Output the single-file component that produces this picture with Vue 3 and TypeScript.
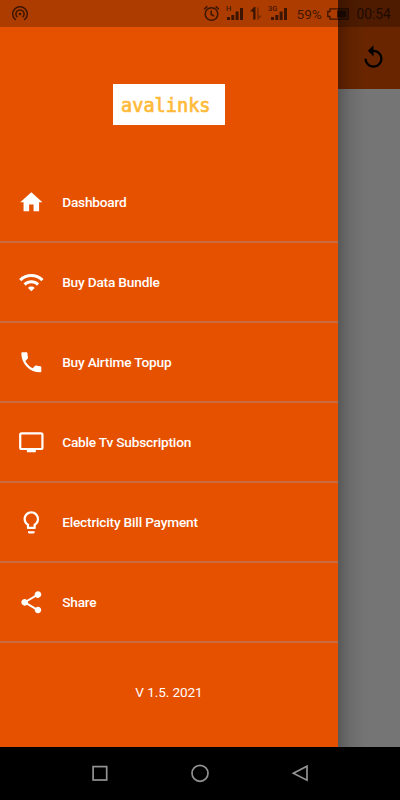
<script setup lang="ts">
interface MenuItem {
  label: string
  path: string
}

const items: MenuItem[] = [
  { label: 'Dashboard', path: 'M10 20v-6h4v6h5v-8h3L12 3 2 12h3v8z' },
  {
    label: 'Buy Data Bundle',
    path: 'M1 9l2 2c4.97-4.97 13.03-4.97 18 0l2-2C16.93 2.93 7.08 2.93 1 9zm8 8l3 3 3-3c-1.65-1.66-4.34-1.66-6 0zm-4-4l2 2c2.76-2.76 7.24-2.76 10 0l2-2C15.14 9.14 8.87 9.14 5 13z',
  },
  {
    label: 'Buy Airtime Topup',
    path: 'M6.62 10.79c1.44 2.83 3.76 5.14 6.59 6.59l2.2-2.2c.27-.27.67-.36 1.02-.24 1.12.37 2.33.57 3.57.57.55 0 1 .45 1 1V20c0 .55-.45 1-1 1-9.39 0-17-7.61-17-17 0-.55.45-1 1-1h3.5c.55 0 1 .45 1 1 0 1.25.2 2.45.57 3.57.11.35.03.74-.25 1.02l-2.2 2.2z',
  },
  {
    label: 'Cable Tv Subscription',
    path: 'M21 3H3c-1.1 0-2 .9-2 2v12c0 1.1.9 2 2 2h5v2h8v-2h5c1.1 0 1.99-.9 1.99-2L23 5c0-1.1-.9-2-2-2zm0 14H3V5h18v12z',
  },
  {
    label: 'Electricity Bill Payment',
    path: 'M9 21c0 .55.45 1 1 1h4c.55 0 1-.45 1-1v-1H9v1zm3-19C8.14 2 5 5.14 5 9c0 2.38 1.19 4.47 3 5.74V17c0 .55.45 1 1 1h6c.55 0 1-.45 1-1v-2.26c1.81-1.27 3-3.36 3-5.74 0-3.86-3.14-7-7-7zm2.85 11.1l-.85.6V16h-4v-2.3l-.85-.6C7.8 12.16 7 10.63 7 9c0-2.76 2.24-5 5-5s5 2.24 5 5c0 1.63-.8 3.16-2.15 4.1z',
  },
  {
    label: 'Share',
    path: 'M18 16.08c-.76 0-1.44.3-1.96.77L8.91 12.7c.05-.23.09-.46.09-.7s-.04-.47-.09-.7l7.05-4.11c.54.5 1.25.81 2.04.81 1.66 0 3-1.34 3-3s-1.34-3-3-3-3 1.34-3 3c0 .24.04.47.09.7L8.04 9.81C7.5 9.31 6.79 9 6 9c-1.66 0-3 1.34-3 3s1.34 3 3 3c.79 0 1.5-.31 2.04-.81l7.12 4.16c-.05.21-.08.43-.08.65 0 1.61 1.31 2.92 2.92 2.92s2.92-1.31 2.92-2.92-1.31-2.92-2.92-2.92z',
  },
]
</script>

<template>
  <div class="phone">
    <div class="screen">
      <main class="page">
        <header class="app-bar">
          <svg class="refresh" viewBox="0 0 24 24">
            <path d="M12 5V1L7 6l5 5V7c3.31 0 6 2.69 6 6s-2.69 6-6 6-6-2.69-6-6H4c0 4.42 3.58 8 8 8s8-3.58 8-8-3.58-8-8-8z" />
          </svg>
        </header>
      </main>

      <aside class="drawer">
        <div class="brand"><div class="logo">avalinks</div></div>
        <nav>
          <a v-for="item in items" :key="item.label" class="row">
            <svg class="row-icon" viewBox="0 0 24 24"><path :d="item.path" /></svg>
            <span>{{ item.label }}</span>
          </a>
        </nav>
        <p class="version">V 1.5. 2021</p>
      </aside>

      <div class="status">
        <svg class="hotspot" viewBox="0 0 16 16">
          <circle cx="8" cy="8" r="1.3" fill="currentColor" stroke="none" />
          <path d="M5.4 11.2A4.1 4.1 0 1 1 10.6 11.2M3.8 14A7.3 7.3 0 1 1 12.2 14" />
        </svg>
        <svg class="alarm" viewBox="0 0 17 17">
          <circle cx="8.5" cy="9" r="6.3" />
          <path d="M8.2 5.5V9.5L11 11M1 4.3L4.4 1.4M12.6 1.4L16 4.3" />
        </svg>
        <div class="cell">
          <span class="net">H</span>
          <svg viewBox="0 0 16 12"><path d="M0 9h3v3H0zM4.3 7h3v5h-3zM8.6 3.5h3V12h-3zM13 0h3v12h-3z" /></svg>
        </div>
        <svg class="updown" viewBox="0 0 12 13">
          <path d="M0 4.5L4 0H5.5V12.5H3.2V4.5z" />
          <path class="down" d="M7.2 0.5H8.7V8.5H12L8 13H7.2z" />
        </svg>
        <div class="cell second">
          <span class="net">3G</span>
          <svg viewBox="0 0 16 12"><path d="M0 9h3v3H0zM4.3 7h3v5h-3zM8.6 3.5h3V12h-3zM13 0h3v12h-3z" /></svg>
        </div>
        <span class="percent">59%</span>
        <svg class="battery" viewBox="0 0 22 12">
          <path class="case" d="M3 .8H21.2V11.2H3V8.5H.8V3.5H3z" />
          <path class="charge" d="M10 2.5H19.5V9.5H10z" />
        </svg>
        <span class="clock">00:54</span>
      </div>
    </div>

    <footer class="keys">
      <svg viewBox="0 0 20 20"><rect x="3.1" y="3.6" width="13.6" height="13.4" /></svg>
      <svg viewBox="0 0 20 20"><circle cx="10" cy="10.3" r="8" /></svg>
      <svg viewBox="0 0 20 20"><path d="M17 3.2V17.2L3.4 10.2z" /></svg>
    </footer>
  </div>
</template>

<style>
body {
  margin: 0;
}
</style>

<style scoped>
.phone {
  width: 400px;
  height: 800px;
  display: flex;
  flex-direction: column;
  overflow: hidden;
  font-family: Roboto, 'Liberation Sans', sans-serif;
}
.screen {
  position: relative;
  height: 747px;
}
.page {
  height: 100%;
  background: #757575;
}
.app-bar {
  height: 89px;
  box-sizing: border-box;
  padding: 25px 13px 0 0;
  display: flex;
  align-items: center;
  justify-content: flex-end;
  background: #692500;
}
.refresh {
  width: 27px;
  height: 27px;
  fill: #000;
}
.drawer {
  position: absolute;
  top: 0;
  left: 0;
  width: 338px;
  height: 747px;
  box-sizing: border-box;
  padding-top: 27px;
  background: #e65100;
  color: #fff;
}
.drawer::after {
  content: '';
  position: absolute;
  top: 0;
  left: 100%;
  width: 28px;
  height: 100%;
  background: linear-gradient(to right, rgba(0, 0, 0, 0.24), rgba(0, 0, 0, 0.08) 45%, transparent);
}
.brand {
  height: 136px;
  box-sizing: border-box;
  padding: 57px 0 0 113px;
}
.logo {
  width: 112px;
  height: 41px;
  box-sizing: border-box;
  padding-left: 8px;
  background: #fff;
  color: #ffba38;
  font: 400 18.6px/43px 'DejaVu Sans Mono', monospace;
  -webkit-text-stroke: 0.7px #ffba38;
}
.row {
  height: 80px;
  box-sizing: border-box;
  display: flex;
  align-items: center;
  gap: 17.7px;
  padding-left: 17.8px;
  border-bottom: 2px solid #c86c40;
  font-size: 13.7px;
  font-weight: 500;
  letter-spacing: -0.2px;
}
.row-icon {
  width: 26.67px;
  height: 26.67px;
  fill: #fff;
}
.version {
  margin: 39px 0 0;
  line-height: 20px;
  text-align: center;
  font-size: 13.6px;
  letter-spacing: -0.1px;
}
.status {
  position: absolute;
  top: 0;
  left: 0;
  width: 400px;
  height: 27px;
  box-sizing: border-box;
  padding: 0 9px 0 12px;
  display: flex;
  align-items: center;
  background: rgba(0, 0, 0, 0.25);
  color: rgba(0, 0, 0, 0.65);
}
.status svg {
  flex: none;
}
.hotspot,
.alarm {
  fill: none;
  stroke: currentColor;
  stroke-width: 1.5;
}
.hotspot {
  width: 16px;
  height: 16px;
}
.alarm {
  width: 17px;
  height: 17px;
  margin-left: 175px;
}
.cell {
  position: relative;
  width: 16px;
  height: 27px;
  margin-left: 7px;
}
.cell svg {
  display: block;
  width: 16px;
  height: 12px;
  margin-top: 8px;
  fill: currentColor;
}
.net {
  position: absolute;
  top: 5px;
  left: -1px;
  font-size: 7.5px;
  line-height: 7px;
  font-weight: 500;
}
.second {
  margin-left: 9px;
}
.second .net {
  left: -3px;
}
.updown {
  width: 12px;
  height: 13px;
  margin-left: 7px;
  fill: currentColor;
}
.down {
  opacity: 0.45;
}
.percent {
  width: 26px;
  margin-left: 9.5px;
  font-size: 13.6px;
}
.battery {
  width: 22px;
  height: 12px;
  margin-left: 4px;
}
.case {
  fill: none;
  stroke: currentColor;
  stroke-width: 1.3;
}
.charge {
  fill: currentColor;
}
.clock {
  margin-left: 8px;
  font-size: 13.8px;
}
.keys {
  height: 53px;
  box-sizing: border-box;
  padding-bottom: 1px;
  display: flex;
  align-items: center;
  justify-content: center;
  gap: 80px;
  background: #000;
}
.keys svg {
  width: 20px;
  height: 20px;
  fill: none;
  stroke: #929292;
  stroke-width: 1.7;
}
</style>
